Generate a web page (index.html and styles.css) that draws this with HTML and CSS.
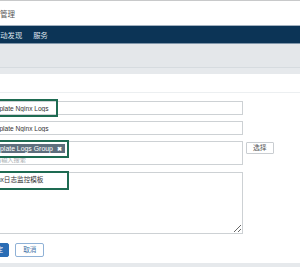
FILE: index.html
```html
<!DOCTYPE html>
<html lang="zh-CN">
<head>
  <meta charset="UTF-8">
  <title>模板管理</title>
  <link rel="stylesheet" href="styles.css">
</head>
<body>

  <div class="header">
    <span class="title">模板管理</span>
  </div>

  <div class="nav">
    <a>自动发现</a>
    <a>服务</a>
  </div>

  <div class="crumbs"></div>

  <div class="panel">
    <div class="panel-head"></div>

    <form class="form">
      <!-- Name -->
      <div class="field marked">
        <input class="input" type="text" value="Template Nginx Logs">
        <span class="mark mark-name"></span>
      </div>

      <!-- Visible name -->
      <div class="field">
        <input class="input" type="text" value="Template Nginx Logs">
      </div>

      <!-- Groups -->
      <div class="field field-row">
        <div class="tag-input marked">
          <span class="tag">Template Logs Group <b>&#x2716;</b></span>
          <input class="tag-search" type="text" placeholder="请输入搜索">
          <span class="mark mark-group"></span>
        </div>
        <button type="button" class="btn-pick">选择</button>
      </div>

      <!-- Description -->
      <div class="field field-desc marked">
        <textarea class="textarea">Nginx日志监控模板</textarea>
        <span class="mark mark-desc"></span>
      </div>

      <div class="actions">
        <button type="submit" class="btn btn-primary">确定</button>
        <button type="button" class="btn btn-default">取消</button>
      </div>
    </form>
  </div>

</body>
</html>
```

FILE: styles.css
```css
body {
  font-family: 'Liberation Sans', 'Noto Sans CJK SC', sans-serif;
  background-color: #e6e9ec;
  margin: 0;
  padding: 0;
  overflow: hidden;
}

.header {
  background-color: white;
  border-top: 1px solid #c8c9ca;
  border-bottom: 1px solid #a3b2c0;
  height: 24px;
  display: flex;
  align-items: center;
}

.title {
  margin-left: -15px;
  font-size: 7.5px;
  color: #555;
}

.nav {
  background-color: #0c3456;
  border-bottom: 1px solid #7f95a9;
  height: 17px;
  display: flex;
  align-items: center;
  gap: 11px;
  margin-left: -7px;
}

.nav a {
  color: #dfe6ee;
  font-size: 7.3px;
}

.crumbs {
  background-color: #e4e7ea;
  border-bottom: 1px solid #d6dbdf;
  height: 23px;
  margin-bottom: 6px;
}

.panel {
  background-color: white;
  padding-bottom: 6px;
}

.panel-head {
  height: 18px;
  border-bottom: 1px solid #eceff1;
}

.form {
  padding-top: 8px;
  margin-left: -18px;
}

.field {
  position: relative;
  width: 261px;
  margin-bottom: 6px;
}

.field-row {
  display: flex;
  align-items: flex-start;
  gap: 3px;
  width: auto;
  margin-bottom: 7px;
}

.input {
  display: block;
  box-sizing: border-box;
  width: 261px;
  height: 14px;
  padding: 0 4px;
  border: 1px solid #cdd1d4;
  border-radius: 0;
  font-family: inherit;
  font-size: 6.6px;
  color: #333;
  outline: none;
}

.tag-input {
  position: relative;
  box-sizing: border-box;
  width: 261px;
  height: 24px;
  padding: 2px 4px 0 2px;
  border: 1px solid #cdd1d4;
  display: flex;
  flex-direction: column;
  align-items: flex-start;
}

.tag {
  display: block;
  height: 9px;
  line-height: 9px;
  padding: 0 3px 0 2px;
  background-color: #5e6f7d;
  color: white;
  font-size: 6.9px;
  white-space: nowrap;
}

.tag b {
  margin-left: 2px;
  font-size: 6px;
}

.tag-search {
  display: block;
  box-sizing: border-box;
  width: 100%;
  height: 8px;
  margin-top: 3px;
  padding: 0 0 0 10px;
  border: none;
  font-family: inherit;
  font-size: 6.2px;
  line-height: 8px;
  outline: none;
}

.tag-search::placeholder {
  color: #a9adb1;
}

.btn-pick {
  margin-top: 1px;
  height: 12px;
  padding: 0 6px;
  background-color: white;
  border: 1px solid #c9cdd1;
  border-radius: 1px;
  font-family: inherit;
  font-size: 6.8px;
  line-height: 10px;
  color: #555;
}

.field-desc {
  margin-bottom: 9px;
}

.textarea {
  display: block;
  box-sizing: border-box;
  width: 261px;
  height: 62px;
  padding: 3px 4px;
  border: 1px solid #cdd1d4;
  border-radius: 0;
  font-family: inherit;
  font-size: 6.6px;
  line-height: 8px;
  color: #333;
  resize: vertical;
  outline: none;
}

/* Highlight boxes drawn over the fields */
.mark {
  position: absolute;
  left: -2px;
  box-sizing: border-box;
  border: 2px solid #1e6b52;
  pointer-events: none;
}

.mark-name {
  top: -2px;
  width: 78px;
  height: 18px;
}

.mark-group {
  top: -2px;
  left: -3px;
  width: 89px;
  height: 18px;
}

.mark-desc {
  top: -1px;
  width: 89px;
  height: 19px;
}

.actions {
  display: flex;
  gap: 6px;
}

.btn {
  height: 14px;
  padding: 0 7px;
  border-radius: 2px;
  font-family: inherit;
  font-size: 6.6px;
  line-height: 12px;
  cursor: pointer;
}

.btn-primary {
  background-color: #2a6db5;
  border: 1px solid #2a6db5;
  color: white;
  padding: 0 5px 0 7px;
}

.btn-default {
  background-color: white;
  border: 1px solid #8fb1d6;
  color: #4174a8;
}
```
